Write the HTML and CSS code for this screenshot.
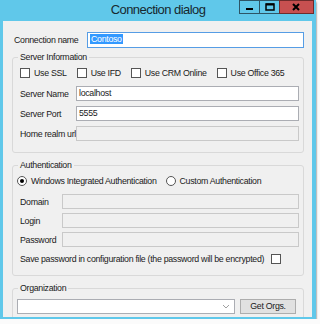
FILE: index.html
```html
<!DOCTYPE html>
<html lang="en">
  <head>
    <meta charset="UTF-8" />
    <title>Connection dialog</title>
    <link rel="stylesheet" href="styles.css">
  </head>
  <body>
    <div class="window">
      <!-- title bar -->
      <div class="titlebar">
        <div class="title">Connection dialog</div>
        <div class="controls">
          <div class="ctl min">
            <svg width="19" height="12" viewBox="0 0 19 12"><rect x="6" y="7" width="7" height="2" fill="#000"/></svg>
          </div>
          <div class="ctl max">
            <svg width="19" height="12" viewBox="0 0 19 12"><rect x="6" y="3" width="8" height="6" fill="none" stroke="#000" stroke-width="1.5"/><rect x="6" y="2.5" width="8" height="2" fill="#000"/></svg>
          </div>
          <div class="ctl close">
            <svg width="33" height="12" viewBox="0 0 33 12"><path d="M13 3 L19 9 M19 3 L13 9" stroke="#000" stroke-width="2"/></svg>
          </div>
        </div>
      </div>

      <div class="client">
        <div class="name-row">
          <span>Connection name</span>
          <div class="textbox focus"><span class="sel">Contoso</span></div>
        </div>

        <!-- server -->
        <fieldset class="group">
          <legend>Server Information</legend>
          <div class="checks">
            <label class="check"><span class="box"></span>Use SSL</label>
            <label class="check"><span class="box"></span>Use IFD</label>
            <label class="check"><span class="box"></span>Use CRM Online</label>
            <label class="check"><span class="box"></span>Use Office 365</label>
          </div>
          <div class="rows">
            <div class="row"><span class="lbl w56">Server Name</span><div class="textbox">localhost</div></div>
            <div class="row"><span class="lbl w56">Server Port</span><div class="textbox">5555</div></div>
            <div class="row"><span class="lbl w56">Home realm url</span><div class="textbox off"></div></div>
          </div>
        </fieldset>

        <!-- auth -->
        <fieldset class="group auth">
          <legend>Authentication</legend>
          <div class="radios">
            <label class="radio"><span class="dot on"></span>Windows Integrated Authentication</label>
            <label class="radio"><span class="dot"></span>Custom Authentication</label>
          </div>
          <div class="rows tight">
            <div class="row"><span class="lbl w42">Domain</span><div class="textbox off"></div></div>
            <div class="row"><span class="lbl w42">Login</span><div class="textbox off"></div></div>
            <div class="row"><span class="lbl w42">Password</span><div class="textbox off"></div></div>
          </div>
          <label class="save">Save password in configuration file (the password will be encrypted)<span class="box"></span></label>
        </fieldset>

        <!-- org -->
        <fieldset class="group org">
          <legend>Organization</legend>
          <div class="org-row">
            <div class="combo">
              <svg width="8" height="5" viewBox="0 0 8 5"><path d="M1 1 L4 4 L7 1" fill="none" stroke="#a0a0a0" stroke-width="1"/></svg>
            </div>
            <div class="btn">Get Orgs.</div>
          </div>
        </fieldset>
      </div>
    </div>
  </body>
</html>
```
FILE: styles.css
```css
* {
  margin: 0;
  padding: 0;
  box-sizing: border-box;
}

body {
  background: #fbfbfb;
  font-family: "Liberation Sans", Arial, sans-serif;
  font-size: 8.8px;
  letter-spacing: -0.3px;
  color: #1a1a1a;
}

/* window frame */
.window {
  width: 316px;
  height: 319px;
  background: #60c8ea;
  box-shadow: 0 2px 2px rgba(0, 0, 0, 0.75);
  display: flex;
  flex-direction: column;
}

.titlebar {
  height: 21px;
  display: grid;
  grid-template-columns: 1fr auto 1fr;
}
.title {
  grid-column: 2;
  font-size: 13px;
  letter-spacing: -0.55px;
  line-height: 20px;
  color: #17282f;
}
.controls {
  grid-column: 3;
  justify-self: end;
  display: flex;
  margin-right: 2px;
}
.ctl {
  height: 14px;
  border: 1px solid #2d5566;
  display: flex;
}
.ctl.min { width: 21px; }
.ctl.max { width: 21px; margin-left: -1px; }
.ctl.close {
  width: 35px;
  margin-left: -1px;
  background: #c75050;
  border-color: #6e2b2b;
}

/* client area */
.client {
  flex: 1;
  margin: 0 4px 2px 3px;
  background: #f0f0f0;
  overflow: hidden;
  padding: 11px 8px 0 9px;
}

.name-row {
  display: flex;
  align-items: center;
  height: 16px;
  padding-left: 2px;
}
.name-row .textbox {
  flex: none;
  margin-left: auto;
  width: 217px;
  height: 16px;
}

.textbox {
  flex: 1;
  height: 15px;
  background: #fff;
  border: 1px solid #abadb3;
  padding-left: 2px;
  line-height: 13px;
}
.textbox.focus {
  border-color: #569de5;
}
.textbox.off {
  background: #f0f0f0;
  border-color: #c9c9c9;
}
.sel {
  background: #3399ff;
  color: #fff;
  padding: 0 1px;
}

/* group boxes */
.group {
  margin-top: 3px;
  padding: 4px 4px 11px 7px;
  border: 1px solid #d9d9d9;
  border-radius: 3px;
  min-width: 0;
}
.group legend {
  line-height: 12px;
  padding: 0 2px;
  margin-left: -2px;
}
.group.auth,
.group.org {
  margin-top: 6px;
}
.group.auth {
  padding-bottom: 10px;
}
.group.org {
  padding-top: 5px;
}

.checks {
  display: flex;
  gap: 10px;
  height: 12px;
  align-items: center;
}
.check,
.radio {
  display: flex;
  align-items: center;
  gap: 4px;
}
.box {
  flex: none;
  width: 10px;
  height: 10px;
  background: #fff;
  border: 1px solid #555;
}

.rows {
  margin-top: 7px;
  display: flex;
  flex-direction: column;
  gap: 5px;
}
.rows.tight {
  gap: 4px;
}
.row {
  display: flex;
  align-items: center;
}
.lbl {
  flex: none;
  white-space: nowrap;
}
.w56 { width: 56px; }
.w42 { width: 42px; }

.radios {
  display: flex;
  gap: 9px;
  height: 12px;
  align-items: center;
  margin-left: -3px;
}
.dot {
  width: 10px;
  height: 10px;
  border: 1px solid #555;
  border-radius: 50%;
  background: #fff;
  display: flex;
  align-items: center;
  justify-content: center;
}
.dot.on::after {
  content: "";
  width: 4px;
  height: 4px;
  border-radius: 50%;
  background: #000;
}

.save {
  margin-top: 6px;
  height: 12px;
  display: flex;
  align-items: center;
  gap: 7px;
}

/* organization */
.org-row {
  display: flex;
  gap: 5px;
  margin-left: -3px;
}
.combo {
  width: 218px;
  height: 15px;
  background: #fff;
  border: 1px solid #abadb3;
  display: flex;
  align-items: center;
  justify-content: flex-end;
  padding-right: 4px;
}
.btn {
  width: 56px;
  height: 15px;
  background: #e1e1e1;
  border: 1px solid #adadad;
  text-align: center;
  line-height: 13px;
}
```
